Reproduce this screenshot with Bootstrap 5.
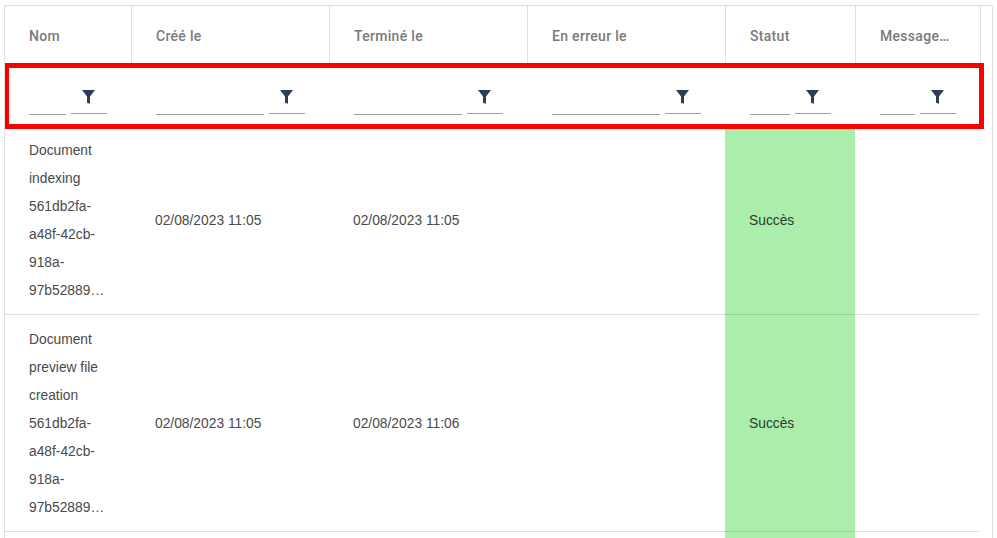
<!DOCTYPE html>
<html lang="fr">
<head>
<meta charset="utf-8">
<title>Tâches</title>
<link href="https://cdn.jsdelivr.net/npm/bootstrap@5.3.0/dist/css/bootstrap.min.css" rel="stylesheet">
<style>
html,body{height:538px;overflow:hidden;background:#fff}
body{padding:5px 4px 0;font-family:"Liberation Sans",Arial,sans-serif;font-size:13.8px;color:#4a4a4a}
.frame{position:relative;border:1px solid #e0e0e0;border-bottom:0;height:533px;overflow:hidden}
.grid-head,.grid-filter{display:grid;grid-template-columns:127px 198px 198px 198px 130px 125px;width:976px}
.grid-rowline{display:grid;grid-template-columns:126px 198px 198px 198px 130px 125px;width:975px}
.head-cell{height:60px;padding:1px 24px 0;border-right:1px solid #e0e0e0;font-family:Roboto,sans-serif;font-weight:500;font-size:14px;letter-spacing:.3px;color:#7a7a7a;white-space:nowrap;overflow:hidden}
.head-label{overflow:hidden;text-overflow:ellipsis}
.grid-filter{height:60px}
.filter-cell{padding:0 25px 11px 24px;gap:5px}
.filter-input{flex:1 1 0;min-width:0;border:0;border-bottom:1px solid #9e9e9e;border-radius:0;background:none;height:20px;padding:0;outline:0}
.filter-btn{flex:0 0 36px;height:32px;border:0;border-bottom:1px solid #9e9e9e;border-radius:0;background:none;padding:0 1px 9px 0;margin-bottom:1px;display:flex;align-items:flex-end;justify-content:center}
.filter-btn svg{display:block}
.body-cell{padding:11px 24px 9px;line-height:28px;border-bottom:1px solid rgba(0,0,0,.12)}
.name-text{overflow-wrap:anywhere}
.ok-cell{background:#abeeab;color:#2b3a2b}
.clip-row{height:60px}
.red-box{position:absolute;left:-1px;top:57px;width:980px;height:66px;border:5px solid #f00;pointer-events:none}
</style>
</head>
<body>
<div class="frame">
  <div class="grid-head">
    <div class="head-cell d-flex align-items-center"><span class="head-label">Nom</span></div>
    <div class="head-cell d-flex align-items-center"><span class="head-label">Créé le</span></div>
    <div class="head-cell d-flex align-items-center"><span class="head-label">Terminé le</span></div>
    <div class="head-cell d-flex align-items-center"><span class="head-label">En erreur le</span></div>
    <div class="head-cell d-flex align-items-center"><span class="head-label">Statut</span></div>
    <div class="head-cell d-flex align-items-center"><span class="head-label">Message…</span></div>
  </div>
  <div class="grid-filter">
    <div class="filter-cell d-flex align-items-end"><input class="filter-input" aria-label="Nom"><button class="filter-btn" aria-label="Filtrer"><svg width="13" height="14" viewBox="0 0 13 14"><path d="M0 0h13L8 6.500V13.800L5 12.800V6.500z" fill="#2c3e57"/></svg></button></div>
    <div class="filter-cell d-flex align-items-end"><input class="filter-input" aria-label="Créé le"><button class="filter-btn" aria-label="Filtrer"><svg width="13" height="14" viewBox="0 0 13 14"><path d="M0 0h13L8 6.500V13.800L5 12.800V6.500z" fill="#2c3e57"/></svg></button></div>
    <div class="filter-cell d-flex align-items-end"><input class="filter-input" aria-label="Terminé le"><button class="filter-btn" aria-label="Filtrer"><svg width="13" height="14" viewBox="0 0 13 14"><path d="M0 0h13L8 6.500V13.800L5 12.800V6.500z" fill="#2c3e57"/></svg></button></div>
    <div class="filter-cell d-flex align-items-end"><input class="filter-input" aria-label="En erreur le"><button class="filter-btn" aria-label="Filtrer"><svg width="13" height="14" viewBox="0 0 13 14"><path d="M0 0h13L8 6.500V13.800L5 12.800V6.500z" fill="#2c3e57"/></svg></button></div>
    <div class="filter-cell d-flex align-items-end"><input class="filter-input" aria-label="Statut"><button class="filter-btn" aria-label="Filtrer"><svg width="13" height="14" viewBox="0 0 13 14"><path d="M0 0h13L8 6.500V13.800L5 12.800V6.500z" fill="#2c3e57"/></svg></button></div>
    <div class="filter-cell d-flex align-items-end"><input class="filter-input" aria-label="Message"><button class="filter-btn" aria-label="Filtrer"><svg width="13" height="14" viewBox="0 0 13 14"><path d="M0 0h13L8 6.500V13.800L5 12.800V6.500z" fill="#2c3e57"/></svg></button></div>
  </div>
  <div class="grid-rowline">
    <div class="body-cell name-text">Document<br>indexing<br>561db2fa-<br>a48f-42cb-<br>918a-<br>97b52889…</div>
    <div class="body-cell d-flex align-items-center">02/08/2023 11:05</div>
    <div class="body-cell d-flex align-items-center">02/08/2023 11:05</div>
    <div class="body-cell"></div>
    <div class="body-cell ok-cell d-flex align-items-center">Succès</div>
    <div class="body-cell"></div>
  </div>
  <div class="grid-rowline">
    <div class="body-cell name-text">Document<br>preview file<br>creation<br>561db2fa-<br>a48f-42cb-<br>918a-<br>97b52889…</div>
    <div class="body-cell d-flex align-items-center">02/08/2023 11:05</div>
    <div class="body-cell d-flex align-items-center">02/08/2023 11:06</div>
    <div class="body-cell"></div>
    <div class="body-cell ok-cell d-flex align-items-center">Succès</div>
    <div class="body-cell"></div>
  </div>
  <div class="grid-rowline clip-row">
    <div></div><div></div><div></div><div></div><div class="ok-cell"></div><div></div>
  </div>
  <div class="red-box"></div>
</div>
<script src="https://cdn.jsdelivr.net/npm/bootstrap@5.3.0/dist/js/bootstrap.bundle.min.js"></script>
</body>
</html>
